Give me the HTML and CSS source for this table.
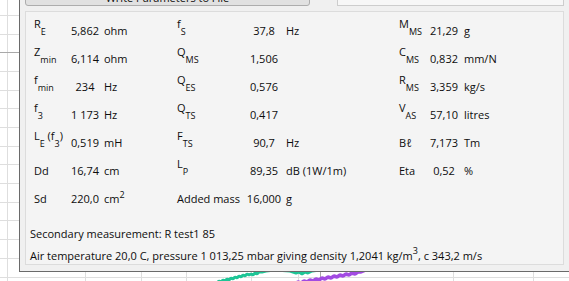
FILE: index.html
```html
<!DOCTYPE html>
<html>
<head>
<meta charset="utf-8">
<link rel="stylesheet" href="styles.css">
</head>
<body>
<div class="chart">
  <svg class="plot" width="569" height="281" viewBox="0 0 569 281">
    <g class="grid">
      <line x1="7.5" y1="0" x2="7.5" y2="281"/>
      <line x1="85.5" y1="0" x2="85.5" y2="281"/>
      <line x1="141.5" y1="0" x2="141.5" y2="281"/>
      <line x1="186.5" y1="0" x2="186.5" y2="281"/>
      <line x1="251.5" y1="0" x2="251.5" y2="281"/>
      <line x1="298.5" y1="0" x2="298.5" y2="281"/>
      <line x1="453.5" y1="0" x2="453.5" y2="281"/>
      <line x1="533.5" y1="0" x2="533.5" y2="281"/>
      <line x1="0" y1="15.5" x2="569" y2="15.5"/>
      <line x1="0" y1="34.5" x2="569" y2="34.5"/>
      <line x1="0" y1="71.5" x2="569" y2="71.5"/>
      <line x1="0" y1="90.5" x2="569" y2="90.5"/>
      <line x1="0" y1="108.5" x2="569" y2="108.5"/>
      <line x1="0" y1="127.5" x2="569" y2="127.5"/>
      <line x1="0" y1="146.5" x2="569" y2="146.5"/>
      <line x1="0" y1="164.5" x2="569" y2="164.5"/>
      <line x1="0" y1="183.5" x2="569" y2="183.5"/>
      <line x1="0" y1="202.5" x2="569" y2="202.5"/>
      <line x1="0" y1="220.5" x2="569" y2="220.5"/>
      <line x1="0" y1="239.5" x2="569" y2="239.5"/>
      <line x1="0" y1="258.5" x2="569" y2="258.5"/>
      <line x1="0" y1="277.5" x2="569" y2="277.5"/>
    </g>
    <g class="grid-major">
      <line x1="0" y1="52.5" x2="569" y2="52.5"/>
      <line x1="320.5" y1="0" x2="320.5" y2="281"/>
    </g>
    <polyline class="trace-green" points="216,284 219,281 221,282 223,280 225,281 227,279 229,280 231,278 233,279 235,277 237,278 239,276 241,277 243,275 245,276 247,274 249,275 251,274 253,275 255,273 257,274 259,272 262,272 266,271 275,270 290,271 296,273 299,272 302,274 305,272 308,273 312,271 320,270"/>
    <polyline class="trace-purple" points="294,285 298,282 301,283 304,281 307,282 310,280 313,281 316,279 319,280 322,278 325,279 328,277 331,278 334,276 337,277 340,275 343,276 346,274 349,275 352,273 355,274 358,272 361,272 366,270 380,268"/>
  </svg>

  <div class="window">
    <div class="topbar">
      <button class="btn">Write Parameters to File</button>
      <div class="field"></div>
    </div>
    <div class="group">
      <div class="params">
        <div class="lab"><span class="u">R</span><span class="s">E</span></div>
        <div class="val">5,862</div>
        <div class="unit u1">ohm</div>
        <div class="lab"><span class="u">f</span><span class="s">S</span></div>
        <div class="val">37,8</div>
        <div class="unit">Hz</div>
        <div class="lab"><span class="u">M</span><span class="s">MS</span></div>
        <div class="val">21,29</div>
        <div class="unit">g</div>

        <div class="lab"><span class="u">Z</span><span class="s">min</span></div>
        <div class="val">6,114</div>
        <div class="unit u1">ohm</div>
        <div class="lab"><span class="u">Q</span><span class="s">MS</span></div>
        <div class="val">1,506</div>
        <div class="unit"></div>
        <div class="lab"><span class="u">C</span><span class="s">MS</span></div>
        <div class="val">0,832</div>
        <div class="unit">mm/N</div>

        <div class="lab"><span class="u">f</span><span class="s">min</span></div>
        <div class="val">234</div>
        <div class="unit u1">Hz</div>
        <div class="lab"><span class="u">Q</span><span class="s">ES</span></div>
        <div class="val">0,576</div>
        <div class="unit"></div>
        <div class="lab"><span class="u">R</span><span class="s">MS</span></div>
        <div class="val">3,359</div>
        <div class="unit">kg/s</div>

        <div class="lab"><span class="u">f</span><span class="s">3</span></div>
        <div class="val">1 173</div>
        <div class="unit u1">Hz</div>
        <div class="lab"><span class="u">Q</span><span class="s">TS</span></div>
        <div class="val">0,417</div>
        <div class="unit"></div>
        <div class="lab"><span class="u">V</span><span class="s">AS</span></div>
        <div class="val">57,10</div>
        <div class="unit">litres</div>

        <div class="lab"><span class="u">L</span><span class="s">E</span><span class="u"> (f</span><span class="s">3</span><span class="u">)</span></div>
        <div class="val">0,519</div>
        <div class="unit u1">mH</div>
        <div class="lab"><span class="u">F</span><span class="s">TS</span></div>
        <div class="val">90,7</div>
        <div class="unit">Hz</div>
        <div class="lab">Bℓ</div>
        <div class="val">7,173</div>
        <div class="unit">Tm</div>

        <div class="lab">Dd</div>
        <div class="val">16,74</div>
        <div class="unit u1">cm</div>
        <div class="lab"><span class="u">L</span><span class="s">P</span></div>
        <div class="val">89,35</div>
        <div class="unit">dB (1W/1m)</div>
        <div class="lab">Eta</div>
        <div class="val">0,52</div>
        <div class="unit">%</div>

        <div class="lab">Sd</div>
        <div class="val">220,0</div>
        <div class="unit u1">cm<span class="sup">2</span></div>
        <div class="lab">Added mass</div>
        <div class="val">16,000</div>
        <div class="unit">g</div>
      </div>
      <div class="notes">
        <div class="note">Secondary measurement: R test1 85</div>
        <div class="note">Air temperature 20,0 C, pressure 1 013,25 mbar giving density 1,2041 kg/m<span class="sup3">3</span>, c 343,2 m/s</div>
      </div>
    </div>
  </div>
</div>
</body>
</html>
```

FILE: styles.css
```css
html, body {
  margin: 0;
  padding: 0;
}

body {
  width: 569px;
  height: 281px;
  overflow: hidden;
  background: #ffffff;
  font-family: "Open Sans", "Noto Sans", "DejaVu Sans", sans-serif;
  font-size: 11px;
  color: #0d0d0d;
}

.chart {
  position: relative;
  width: 569px;
  height: 281px;
  overflow: hidden;
}

.plot {
  position: absolute;
  left: 0;
  top: 0;
}

.grid line {
  stroke: #dedede;
  stroke-width: 1;
}

.grid-major line {
  stroke: #a9a9a9;
  stroke-width: 1;
}

.trace-green {
  fill: none;
  stroke: #1ec596;
  stroke-width: 3;
  stroke-linejoin: bevel;
}

.trace-purple {
  fill: none;
  stroke: #a24be2;
  stroke-width: 3.5;
  stroke-linejoin: bevel;
}

.window {
  position: absolute;
  left: 19px;
  top: -40px;
  width: 560px;
  height: 312px;
  box-sizing: border-box;
  background: #f0f0f0;
  border-left: 1px solid #6a6a6a;
  border-bottom: 1px solid #6a6a6a;
  padding: 23px 0 0 5px;
}

.topbar {
  display: flex;
  gap: 27px;
  height: 23px;
}

.btn {
  width: 285px;
  height: 23px;
  box-sizing: border-box;
  margin: 0;
  border: 1px solid #adadad;
  border-radius: 3px;
  background: #e1e1e1;
  font: inherit;
  color: #0d0d0d;
  line-height: 15px;
  padding: 6px 0 0 0;
  text-align: center;
  display: block;
}

.field {
  width: 227px;
  height: 23px;
  box-sizing: border-box;
  border: 1px solid #cdcdcd;
  background: #f7f7f7;
}

.group {
  margin-top: 5px;
  width: 539px;
  height: 254px;
  box-sizing: border-box;
  border: 1px solid #dcdcdc;
  background: #f4f4f4;
  padding: 5px 0 0 4px;
}

.params {
  display: grid;
  grid-template-columns: 36px 30px 77px 67px 40px 115px 27px 36px 75px;
  grid-auto-rows: 28px;
  line-height: 28px;
  margin-left: 4px;
  white-space: nowrap;
}

.val {
  text-align: center;
}

.unit {
  padding-left: 2px;
}

.unit.u1 {
  padding-left: 4px;
}

.u {
  vertical-align: 7px;
  line-height: 1;
}

.s {
  font-size: 9px;
  line-height: 1;
}

.sup {
  font-size: 9px;
  vertical-align: 5px;
  line-height: 1;
}

.sup3 {
  font-size: 9px;
  vertical-align: 6px;
  line-height: 1;
}

.notes {
  margin-top: 10px;
}

.note {
  line-height: 22px;
  white-space: nowrap;
}
```
